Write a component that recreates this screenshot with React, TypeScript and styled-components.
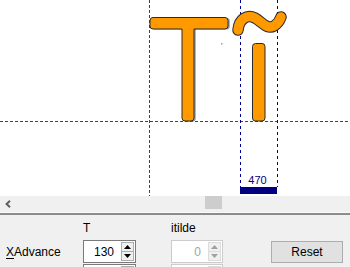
import styled, { createGlobalStyle } from 'styled-components'

const GlobalStyle = createGlobalStyle`
  html, body {
    margin: 0;
    padding: 0;
    background: #f0f0f0;
  }
  body {
    font-family: 'Liberation Sans', Arial, sans-serif;
    font-size: 12px;
    color: #000;
  }
`

const Window = styled.div`
  width: 350px;
  height: 267px;
  overflow: hidden;
  display: flex;
  flex-direction: column;
  background: #f0f0f0;
`

const Canvas = styled.div`
  flex: none;
  height: 196px;
  background: #fff;
  svg {
    display: block;
  }
`

const HScroll = styled.div`
  flex: none;
  height: 16px;
  display: flex;
  align-items: flex-start;
  background: #f0f0f0;
`

const ScrollArrow = styled.div`
  width: 16px;
  height: 15px;
  display: flex;
  align-items: center;
  justify-content: center;
  margin-right: 189px;
`

const Thumb = styled.div`
  width: 17px;
  height: 13px;
  background: #cdcdcd;
`

const Separator = styled.div`
  flex: none;
  height: 2px;
  background: #8c8c8c;
  border-top: 1px solid #fafafa;
`

const Panel = styled.div`
  flex: 1;
  display: grid;
  grid-template-columns: 77px 88px 99px 72px;
  grid-template-rows: 24px 23px 23px;
  row-gap: 1px;
  padding-left: 6px;
  align-items: center;
`

const Heading = styled.div`
  align-self: center;
  padding-top: 1px;
`

const Label = styled.div`
  u {
    text-decoration: underline;
    text-underline-offset: 2px;
  }
`

const NumBox = styled.div<{ $disabled?: boolean; $width: number }>`
  box-sizing: border-box;
  width: ${(p) => p.$width}px;
  height: 23px;
  display: flex;
  align-items: center;
  background: #fff;
  border: 1px solid ${(p) => (p.$disabled ? '#cccccc' : '#7a7a7a')};
  color: ${(p) => (p.$disabled ? '#a3a3a3' : '#000')};
  padding: 1px 1px 1px 0;
`

const NumValue = styled.div`
  flex: 1;
  text-align: right;
  padding-right: 7px;
`

const Spin = styled.div<{ $disabled?: boolean }>`
  box-sizing: border-box;
  width: 13px;
  height: 19px;
  display: flex;
  flex-direction: column;
  border: 1px solid ${(p) => (p.$disabled ? '#dcdcdc' : '#adadad')};
  background: #f0f0f0;
`

const SpinHalf = styled.div<{ $disabled?: boolean; $down?: boolean }>`
  flex: 1;
  display: flex;
  align-items: center;
  justify-content: center;
  border-top: ${(p) => (p.$down ? `1px solid ${p.$disabled ? '#dcdcdc' : '#adadad'}` : 'none')};
  color: ${(p) => (p.$disabled ? '#a0a0a0' : '#000')};
`

const ResetButton = styled.button`
  box-sizing: border-box;
  width: 72px;
  height: 22px;
  margin-top: 1px;
  margin-left: 1px;
  background: #e1e1e1;
  border: 1px solid #adadad;
  font-family: inherit;
  font-size: 12px;
  color: #000;
  padding: 0;
`

function Arrow({ down }: { down?: boolean }) {
  return (
    <svg width="7" height="4" viewBox="0 0 7 4">
      <path d={down ? 'M0 0H7L3.5 4Z' : 'M0 4H7L3.5 0Z'} fill="currentColor" />
    </svg>
  )
}

function NumField({ value, disabled, width }: { value?: string; disabled?: boolean; width: number }) {
  return (
    <NumBox $disabled={disabled} $width={width}>
      <NumValue>{value}</NumValue>
      <Spin $disabled={disabled}>
        <SpinHalf $disabled={disabled}>
          <Arrow />
        </SpinHalf>
        <SpinHalf $disabled={disabled} $down>
          <Arrow down />
        </SpinHalf>
      </Spin>
    </NumBox>
  )
}

const T_PATH =
  'M153,17.5 H225 Q228,17.5 228,20.5 V26 Q228,29 225,29 H194 V118 Q194,121 191,121 H185 Q182,121 182,118 V29 H153 Q150,29 150,26 V20.5 Q150,17.5 153,17.5 Z'
const TILDE_PATH = 'M238,30 C239,19 247,14 255,18 C262,22 267,30 274,26 Q279,23 281,17'

function GlyphView() {
  return (
    <svg width="350" height="196" viewBox="0 0 350 196">
      <g strokeWidth="1" fill="none" shapeRendering="crispEdges">
        <line x1="0" y1="121.5" x2="350" y2="121.5" stroke="#e00000" strokeDasharray="3 2" />
        <line x1="149.5" y1="0" x2="149.5" y2="196" stroke="#e00000" strokeDasharray="3 2" />
        <line x1="240.5" y1="0" x2="240.5" y2="187" stroke="#000090" strokeDasharray="3 3" />
        <line x1="277.5" y1="0" x2="277.5" y2="187" stroke="#000090" strokeDasharray="3 3" />
      </g>
      <path d={T_PATH} transform="translate(1.8 0.6)" fill="#8a8a8a" opacity="0.8" />
      <path d={T_PATH} fill="#ff9900" stroke="#2b2b2b" strokeWidth="1" />
      <rect x="252.5" y="43.5" width="12.5" height="77.5" rx="3" fill="#ff9900" stroke="#2b2b2b" />
      <path d={TILDE_PATH} fill="none" stroke="#2b2b2b" strokeWidth="11.5" strokeLinecap="round" />
      <path d={TILDE_PATH} fill="none" stroke="#ff9900" strokeWidth="9.5" strokeLinecap="round" />
      <rect x="221" y="43" width="1.5" height="1.5" fill="#9a9a9a" />
      <text
        x="257.5"
        y="184"
        textAnchor="middle"
        fontSize="11"
        fontFamily="'Liberation Sans', Arial, sans-serif"
        fill="#000080"
      >
        470
      </text>
      <rect x="240" y="187" width="37" height="7" fill="#000080" />
    </svg>
  )
}

export default function App() {
  return (
    <>
      <GlobalStyle />
      <Window>
        <Canvas>
          <GlyphView />
        </Canvas>
        <HScroll>
          <ScrollArrow>
            <svg width="6" height="8" viewBox="0 0 6 8">
              <path d="M5 0.8L1.6 4L5 7.2" fill="none" stroke="#606060" strokeWidth="2" />
            </svg>
          </ScrollArrow>
          <Thumb />
        </HScroll>
        <Separator />
        <Panel>
          <div />
          <Heading>T</Heading>
          <Heading>itilde</Heading>
          <div />

          <Label>
            <u>X</u>Advance
          </Label>
          <NumField value="130" width={53} />
          <NumField value="0" width={52} disabled />
          <ResetButton>Reset</ResetButton>

          <div />
          <NumField width={53} />
          <NumField width={52} disabled />
          <div />
        </Panel>
      </Window>
    </>
  )
}
